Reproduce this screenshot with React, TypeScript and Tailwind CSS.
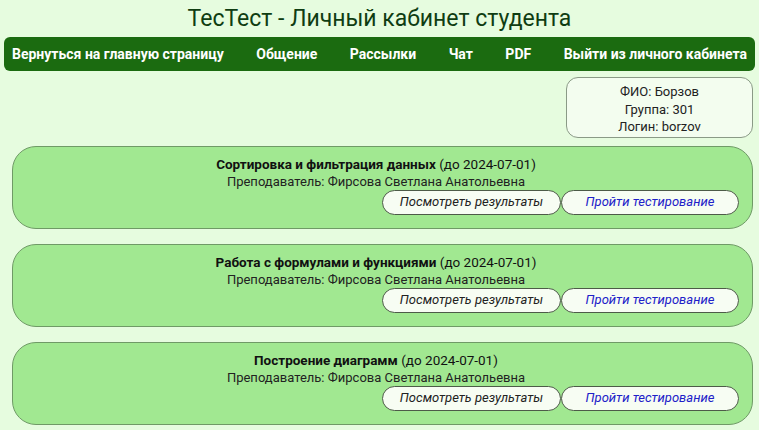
const navItems = [
  "Вернуться на главную страницу",
  "Общение",
  "Рассылки",
  "Чат",
  "PDF",
  "Выйти из личного кабинета",
]

const courses = [
  { title: "Сортировка и фильтрация данных", due: "2024-07-01" },
  { title: "Работа с формулами и функциями", due: "2024-07-01" },
  { title: "Построение диаграмм", due: "2024-07-01" },
]

function CourseCard({ title, due }: { title: string; due: string }) {
  return (
    <div className="flex h-[83px] flex-col rounded-[24px] border border-[#6f9a66] bg-[#a1e891] pt-[9px] pr-[13px]">
      <div className="text-center text-[13.5px] leading-[17px] text-[#111]">
        <span className="font-bold">{title}</span> (до {due})
      </div>
      <div className="text-center text-[13px] leading-[17px] text-[#222]">
        Преподаватель: Фирсова Светлана Анатольевна
      </div>
      <div className="flex justify-end">
        <button className="h-[25px] w-[179px] rounded-full border border-[#4d5b48] bg-[#f7fdf3] text-[13px] italic text-[#222]">
          Посмотреть результаты
        </button>
        <button className="h-[25px] w-[178px] rounded-full border border-[#4d5b48] bg-[#f7fdf3] text-[13px] italic text-[#2020c8]">
          Пройти тестирование
        </button>
      </div>
    </div>
  )
}

export default function App() {
  return (
    <div
      className="h-[430px] overflow-hidden bg-[#e6fcdf] px-[4px]"
      style={{ fontFamily: 'Roboto, "Noto Sans", sans-serif' }}
    >
      <h1 className="pt-[2px] text-center text-[23px] leading-[34px] text-[#0f3d12]">
        ТесТест - Личный кабинет студента
      </h1>
      <nav className="mt-[1px] flex h-[34px] items-center justify-between rounded-[6px] bg-[#1b6b10] px-[8px]">
        {navItems.map((item) => (
          <a key={item} className="text-[14px] font-bold whitespace-nowrap text-white">
            {item}
          </a>
        ))}
      </nav>
      <div className="mt-[6px] flex justify-end pr-[2px]">
        <div className="w-[187px] rounded-[12px] border border-[#8a9a86] bg-[#f3fdef] pt-[5px] pb-[1px] text-center text-[13px] leading-[17.5px] text-[#222]">
          <div>ФИО: Борзов</div>
          <div>Группа: 301</div>
          <div>Логин: borzov</div>
        </div>
      </div>
      <div className="mt-[8px] flex flex-col gap-[15px] pl-[8px] pr-[2px]">
        {courses.map((c) => (
          <CourseCard key={c.title} title={c.title} due={c.due} />
        ))}
      </div>
    </div>
  )
}
